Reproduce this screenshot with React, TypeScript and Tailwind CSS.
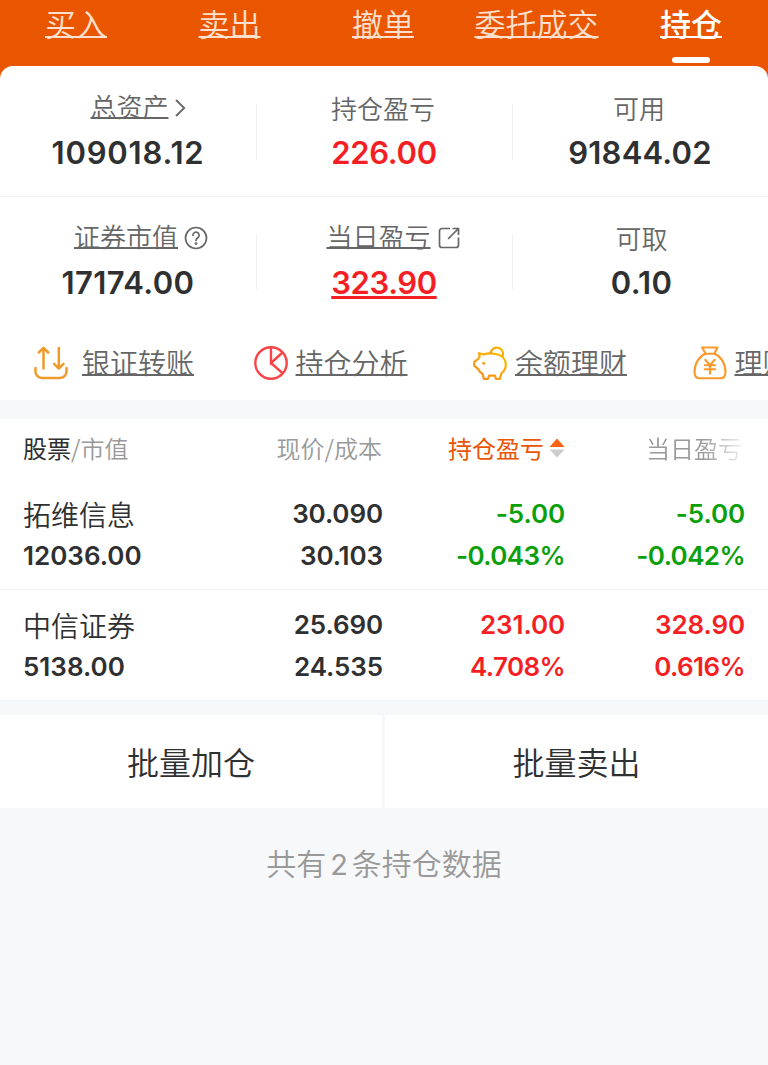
import type { ReactNode } from "react";
import clsx from "clsx";

const tabs = [
  { name: "买入", width: "w-[152px]" },
  { name: "卖出", width: "w-[155px]" },
  { name: "撤单", width: "w-[152px]" },
  { name: "委托成交", width: "w-[155px]" },
  { name: "持仓", width: "w-[154px]", active: true },
];

const holdings = [
  {
    name: "拓维信息",
    value: "12036.00",
    price: "30.090",
    cost: "30.103",
    profit: "-5.00",
    profitRate: "-0.043%",
    today: "-5.00",
    todayRate: "-0.042%",
    color: "text-[#0b9f0b]",
  },
  {
    name: "中信证券",
    value: "5138.00",
    price: "25.690",
    cost: "24.535",
    profit: "231.00",
    profitRate: "4.708%",
    today: "328.90",
    todayRate: "0.616%",
    color: "text-[#f41f25]",
  },
];

const link =
  "underline decoration-[1.5px] underline-offset-[0px] [text-decoration-skip-ink:none]";

function HelpIcon() {
  return (
    <svg className="size-[24px]" viewBox="0 0 24 24" fill="none" stroke="#666" strokeWidth="1.7" strokeLinecap="round">
      <circle cx="12" cy="12" r="10.5" />
      <path d="M8.9 9.3a3.1 3.1 0 1 1 4.9 2.5c-1.2.8-1.8 1.4-1.8 2.6" />
      <circle cx="12" cy="17.6" r="0.6" fill="#666" />
    </svg>
  );
}

function ShareIcon() {
  return (
    <svg className="size-[22px]" viewBox="0 0 22 22" fill="none" stroke="#666" strokeWidth="1.7">
      <path d="M12 1.5H4A2.5 2.5 0 0 0 1.5 4v14A2.5 2.5 0 0 0 4 20.5h14a2.5 2.5 0 0 0 2.5-2.5v-7.5" />
      <path d="M14.5 1.5h6v6.5M20 2 10 12" />
    </svg>
  );
}

function TransferIcon() {
  return (
    <svg className="size-[34px]" viewBox="0 0 34 34" fill="none" stroke="#f09a2a" strokeWidth="2.5" strokeLinecap="round" strokeLinejoin="round">
      <path d="M9.5 22.5V2M4.8 6.5l4.7-4.7 4.7 4.7" />
      <path d="M24.8 2v20.5M20.1 17.8l4.7 4.7 4.7-4.7" />
      <path d="M1.5 22v3a6.5 6.5 0 0 0 6.5 7h18a6.5 6.5 0 0 0 6.5-7v-3" />
    </svg>
  );
}

function PieIcon() {
  return (
    <svg className="size-[34px]" viewBox="0 0 34 34" fill="none" stroke="#f84446" strokeWidth="2.4">
      <circle cx="17" cy="17" r="15.7" />
      <path d="M17 1.5V17l11.5-10.5M17 17l11.8 10.3" />
    </svg>
  );
}

function PiggyIcon() {
  return (
    <svg className="size-[34px]" viewBox="0 0 34 34" fill="none" stroke="url(#pig)" strokeWidth="2.2" strokeLinejoin="round">
      <defs>
        <linearGradient id="pig" x1="0" y1="1" x2="1" y2="0">
          <stop offset="0" stopColor="#f58a1c" />
          <stop offset="1" stopColor="#fbc000" />
        </linearGradient>
      </defs>
      <path d="M6 7.2l5 1.3C14 7.3 18 7.2 22 7.9c6.500.8 10.8 5 10.8 11 0 3.8-1.8 6.3-4.5 8.6l-1.3 5.3h-4.2l-.8-3.2h-6l-.9 3.2h-4.3l-1.4-5C7.3 26.8 6 25 5 22.8l-3.7-3.1v-3.8l3.6-2.7c.4-1 1-1.7 1.8-2.5z" />
      <path d="M17.6 7.3a6.2 6.2 0 1 1 11.6 3.5" />
      <circle cx="10.7" cy="17.2" r="1.5" fill="#f9a01a" stroke="none" />
    </svg>
  );
}

function MoneyBagIcon() {
  return (
    <svg className="size-[34px]" viewBox="0 0 34 34" fill="none" stroke="#f99a2b" strokeWidth="2.1" strokeLinecap="round" strokeLinejoin="round">
      <path d="M9 1.5h15.5l-3.2 6.2h-8.6z" />
      <path d="M12.3 7.7C6 10.5 1.5 17.5 1.5 26c0 4.5 1.7 6.3 5.5 6.3h20c3.8 0 5.5-1.8 5.5-6.3 0-8.5-4.5-15.5-10.8-18.3" />
      <path d="M12.3 13.8l4.7 5.3 4.7-5.3M17 19.1v8.7M11.8 19.3h10.4M11.8 23.3h10.4" />
    </svg>
  );
}

const shortcuts = [
  { name: "银证转账", icon: <TransferIcon />, gap: "gap-[14px]" },
  { name: "持仓分析", icon: <PieIcon />, gap: "gap-[8px]" },
  { name: "余额理财", icon: <PiggyIcon />, gap: "gap-[8px]" },
  { name: "理财", icon: <MoneyBagIcon />, gap: "gap-[8px]" },
];

function Stat({ label, value, valueClass = "text-[#2f3031]" }: { label: ReactNode; value: string; valueClass?: string }) {
  return (
    <div className="flex w-64 shrink-0 flex-col items-center">
      <div className="flex h-[36px] items-center text-[26px] leading-[36px] text-[#666]">{label}</div>
      <div className={clsx("mt-[7px] font-[Inter] text-[31px] leading-[40px] font-semibold", valueClass)}>{value}</div>
    </div>
  );
}

function Divider() {
  return <div className="-mr-px mt-[14px] h-[56px] w-px shrink-0 bg-[#f0f0f0]" />;
}

function Cell({ top, bottom, className }: { top: string; bottom: string; className: string }) {
  return (
    <div className={clsx("text-right font-[Inter] text-[26px] leading-[42px] font-semibold tracking-[-0.1px]", className)}>
      <div>{top}</div>
      <div className={clsx(bottom.endsWith("%") && "tracking-[-0.6px]")}>{bottom}</div>
    </div>
  );
}

export default function App() {
  return (
    <div className="h-[1065px] w-[768px] overflow-hidden bg-[#f7f8fa] font-['Noto_Sans_CJK_SC',sans-serif] font-[350]">
      <nav className="flex h-[66px] bg-[#ea5500]">
        {tabs.map((tab) => (
          <div key={tab.name} className={clsx("flex shrink-0 flex-col items-center", tab.width)}>
            <span
              className={clsx(
                "text-[31px] leading-[46px] whitespace-nowrap",
                link,
                tab.active ? "font-medium text-white" : "text-[#fde0cf]"
              )}
            >
              {tab.name}
            </span>
            {tab.active && <div className="mt-[11px] h-[6px] w-[38px] rounded-full bg-white" />}
          </div>
        ))}
      </nav>

      <div className="bg-[#ea5500]">
        <section className="h-[334px] overflow-hidden rounded-t-[13px] bg-white">
          <div className="flex h-[131px] border-b border-[#f0f0f0] pt-[24px]">
            <Stat
              label={
                <>
                  <span className={clsx("-mt-[4px] ml-[20px]", link)}>总资产</span>
                  <svg className="-mt-[1px] ml-[5px] h-[20px] w-[12px]" viewBox="0 0 12 20" fill="none" stroke="#666" strokeWidth="1.8">
                    <path d="M2 2l8.2 8L2 18" />
                  </svg>
                </>
              }
              value="109018.12"
              valueClass="text-[#2f3031] tracking-[0.8px]"
            />
            <Divider />
            <Stat label={<span className="-ml-[2px]">持仓盈亏</span>} value="226.00" valueClass="text-[#f41f25] tracking-[-0.3px]" />
            <Divider />
            <Stat label={<span className="-ml-[2px]">可用</span>} value="91844.02" valueClass="text-[#2f3031] tracking-[0.2px]" />
          </div>

          <div className="flex h-[130px] pt-[23px]">
            <Stat
              label={
                <>
                  <span className={clsx("-mt-[4px] ml-[26px]", link)}>证券市值</span>
                  <div className="-mt-[1px] ml-[6px]">
                    <HelpIcon />
                  </div>
                </>
              }
              value="17174.00"
              valueClass="text-[#2f3031] tracking-[0.4px]"
            />
            <Divider />
            <Stat
              label={
                <>
                  <span className={clsx("-mt-[4px] ml-[18px]", link)}>当日盈亏</span>
                  <div className="-mt-[1px] ml-[7px]">
                    <ShareIcon />
                  </div>
                </>
              }
              value="323.90"
              valueClass="text-[#f41f25] tracking-[-0.4px] underline decoration-[3px] underline-offset-[2px]"
            />
            <Divider />
            <Stat label={<span className="ml-[3px]">可取</span>} value="0.10" valueClass="ml-[3px] text-[#2f3031] tracking-[0.3px]" />
          </div>

          <div className="flex pt-[15px] pl-[34px]">
            {shortcuts.map((item) => (
              <div key={item.name} className={clsx("flex w-[219.5px] shrink-0 items-center", item.gap)}>
                <div className="pt-[2px]">{item.icon}</div>
                <span className={clsx("text-[28px] leading-[40px] whitespace-nowrap text-[#666]", link)}>{item.name}</span>
              </div>
            ))}
          </div>
        </section>
      </div>

      <section className="mt-[19px] bg-white">
        <div className="flex h-[60px] items-start pt-[12px] pl-[23px] text-[24px] leading-[34px] text-[#999]">
          <div className="w-[180px]">
            <span className="font-normal text-[#2f3031]">股票</span>/市值
          </div>
          <div className="w-[179px] text-right">现价/成本</div>
          <div className="flex w-[183px] items-center justify-end gap-[5px] font-normal text-[#ea5504]">
            持仓盈亏
            <svg className="h-[20px] w-[16px]" viewBox="0 0 16 20">
              <path d="M8 0.5 15.5 9H0.5z" fill="#fb6113" />
              <path d="M8 19.5 15.5 11.5H0.5z" fill="#ccc" />
            </svg>
          </div>
          <div className="w-[180px] pr-[3px] text-right [mask-image:linear-gradient(to_right,#000_138px,transparent_184px)]">
            当日盈亏
          </div>
        </div>

        {holdings.map((item) => (
          <div key={item.name} className="flex h-[111px] border-b border-[#f2f3f5] pt-[14px] pl-[23px]">
            <div className="w-[180px] text-[#2f3031]">
              <div className="text-[28px] leading-[42px]">{item.name}</div>
              <div className="font-[Inter] text-[26px] leading-[42px] font-semibold">{item.value}</div>
            </div>
            <Cell top={item.price} bottom={item.cost} className="w-[180px] text-[#2f3031]" />
            <Cell top={item.profit} bottom={item.profitRate} className={clsx("w-[182px]", item.color)} />
            <Cell top={item.today} bottom={item.todayRate} className={clsx("w-[180px]", item.color)} />
          </div>
        ))}
      </section>

      <div className="mt-[14px] flex h-[93px] gap-[3px] text-center text-[32px] leading-[92px] text-[#2f3031]">
        <button className="w-[382px] bg-white pb-[2px]">批量加仓</button>
        <button className="flex-1 bg-white pb-[2px]">批量卖出</button>
      </div>

      <p className="mt-[32px] text-center text-[30px] leading-[44px] text-[#999]">
        共有<span className="mx-[4px] font-[Inter] text-[29px] font-normal">2</span>条持仓数据
      </p>
    </div>
  );
}
